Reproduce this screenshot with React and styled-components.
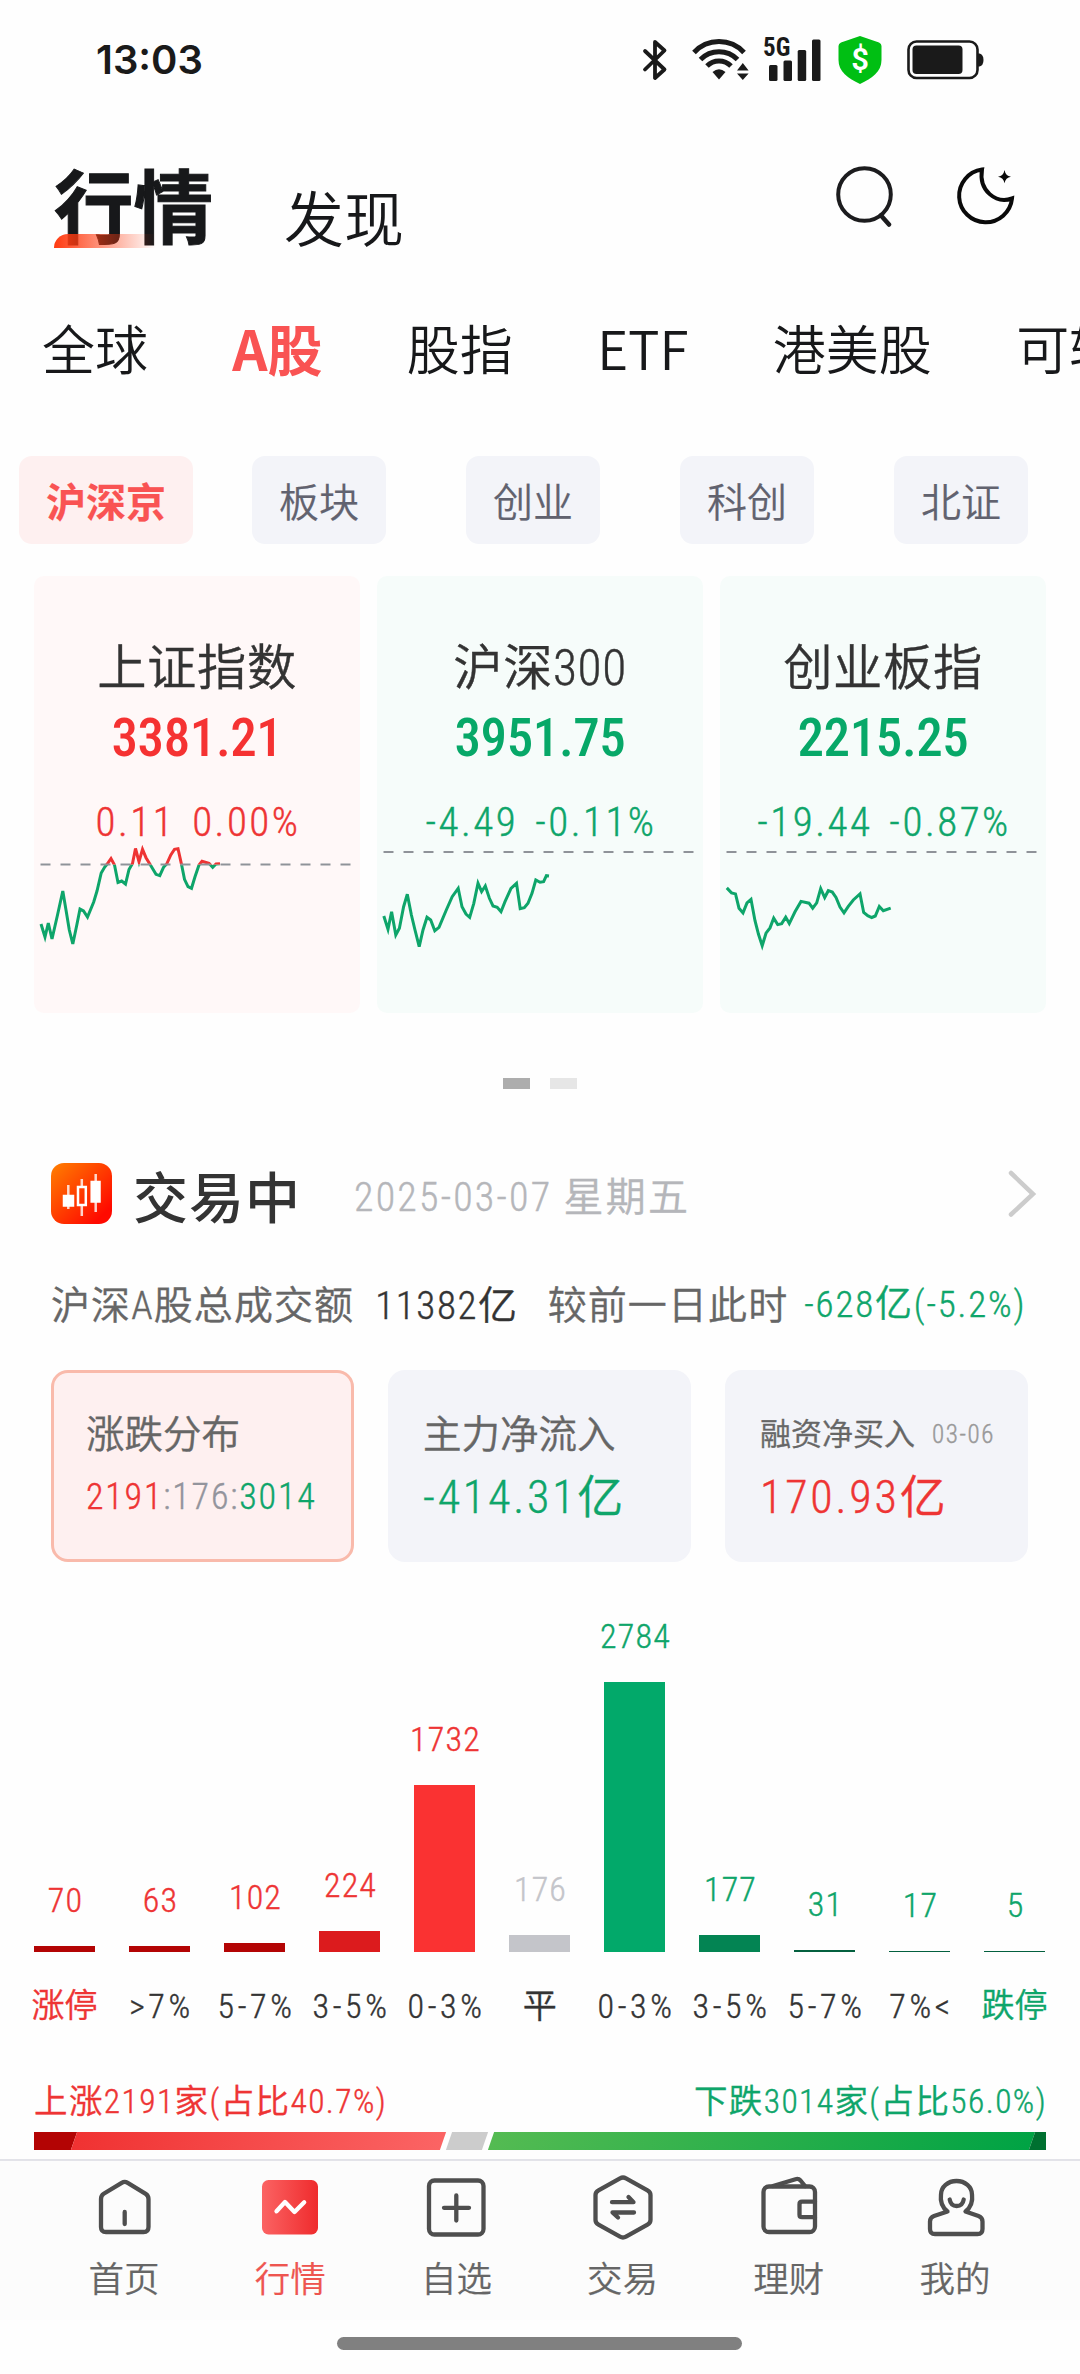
import React from "react";

import styled, { createGlobalStyle, css } from "styled-components";

const RED = "#ee3434";
const GREEN = "#0ea56a";

const SANS = `"Noto Sans CJK SC", sans-serif`;
const NUM = `"Roboto Condensed", "Noto Sans CJK SC DemiLight", "Noto Sans CJK SC", sans-serif`;

const CATEGORIES = ["全球", "A股", "股指", "ETF", "港美股", "可转债"];
const CHIPS = ["沪深京", "板块", "创业", "科创", "北证"];

const INDEXES = [
  {
    name: "上证指数",
    price: "3381.21",
    diff: "0.11",
    rate: "0.00%",
    up: true,
    base: 24.6,
    points:
      "7,84 11,97 14.3,83 18,99 23.5,75 28.8,51 32,70 35.3,90 38.8,104 42.8,85 46,69 49.5,71 53.5,77 59.7,62 63,51 67.2,33 70.7,27 73,24.3 77,18.5 80.5,25 84,42.5 87.7,41 91.5,44 95,29.5 98.5,23.5 101.5,8.5 105,21.7 108.5,9.3 112,17.7 116,24.3 122,34.3 125.8,35.7 129.5,27.3 132.7,24 136.8,15 140.5,9.3 144,8.7 147.5,24.3 150.5,39.3 154,46.7 157.5,48.3 161,36.7 165,25 168,21.3 175,23.3 178.7,27.3 182,24 186,23.7",
  },
  {
    name: "沪深300",
    price: "3951.75",
    diff: "-4.49",
    rate: "-0.11%",
    base: 12,
    points:
      "6.8,76 11,89.3 14.6,71.7 18.8,95 22.4,88.3 26.6,66.7 30.3,54.3 34.4,75 38,90 42.2,106.7 46,90 50,77.3 53.7,80 57.8,90.7 62,87.3 69.3,70 75.2,56.7 81.2,48.3 85,66.7 89,74 92.7,77.3 96.8,63.3 101,43.3 104.6,51.7 108.3,46 112.4,58.3 116,66 120.2,67.3 124,71.7 128,61.7 134,48.3 139.5,43.3 143.2,68.7 147.3,67.7 151,63.3 155,53.3 158.8,40 163,42.3 166.6,41.7 169.4,35.7 172,36",
  },
  {
    name: "创业板指",
    price: "2215.25",
    diff: "-19.44",
    rate: "-0.87%",
    base: 12,
    points:
      "6.8,47.9 11.5,52.9 15.5,53.9 19,68.2 23,72.9 27,62.9 31,59.3 35,80.7 38.5,94.3 42.2,105.7 46,93.2 50,87.9 53.7,78.2 57.7,84.6 61.7,83.6 65.7,77.1 69.3,83.6 75,71.8 81,61.4 89,63.2 92.7,68.2 96.7,62.9 100.7,48.6 104.7,57.5 108.3,50.7 112.3,52.1 116,57.5 120,67.1 124,72.9 128.3,66.4 133.3,60 140,53.9 143.7,72.5 147.7,75.7 151.7,77.5 155.3,76 159.3,66.4 163.3,70.7 170.7,68.2",
  },
];

const BARS = [
  { label: "涨停", value: 70, height: 6, fill: "#b30404", text: RED, labelColor: RED },
  { label: ">7%", value: 63, height: 6, fill: "#b30404", text: RED },
  { label: "5-7%", value: 102, height: 9, fill: "#b30404", text: RED },
  { label: "3-5%", value: 224, height: 21, fill: "#dc1b1d", text: RED },
  { label: "0-3%", value: 1732, height: 167, fill: "#fa3232", text: RED },
  { label: "平", value: 176, height: 17, fill: "#c4c5ca", text: "#c4c5ca" },
  { label: "0-3%", value: 2784, height: 270, fill: "#02a96a", text: GREEN },
  { label: "3-5%", value: 177, height: 17, fill: "#038453", text: GREEN },
  { label: "5-7%", value: 31, height: 2, fill: "#04603f", text: GREEN },
  { label: "7%<", value: 17, height: 1, fill: "#04603f", text: GREEN },
  { label: "跌停", value: 5, height: 1, fill: "#04603f", text: GREEN, labelColor: GREEN },
];

const TABS = [
  {
    label: "首页",
    icon: (
      <>
        <path d="M10 25q0-3.500 2.700-5.200L30.700 8.800q3-1.800 6 0l18 11Q57.500 21.500 57.500 25v28q0 5-5 5H15q-5 0-5-5Z" />
        <path d="M33.700 38v12" />
      </>
    ),
  },
  {
    label: "行情",
    active: true,
    icon: (
      <>
        <defs>
          <linearGradient id="quoteBg">
            <stop offset="0" stopColor="#fb6363" />
            <stop offset="1" stopColor="#ef2b2d" />
          </linearGradient>
        </defs>
        <rect x="5" y="6" width="56" height="54.500" rx="6.500" fill="url(#quoteBg)" stroke="none" />
        <path d="m19.500 37.300 8.500-9.300 9.500 10 9.700-9.700" stroke="#fff" />
      </>
    ),
  },
  {
    label: "自选",
    icon: (
      <>
        <rect x="6" y="6.500" width="54.500" height="54" rx="5.500" />
        <path d="M21 33.800h25M33.300 21.500v25" />
      </>
    ),
  },
  {
    label: "交易",
    icon: (
      <>
        <path d="M30 4.300q3-1.600 6 0l21.500 12Q60.500 18 60.500 21v25q0 3-3 4.700L36 62.700q-3 1.600-6 0l-21.500-12Q5.500 49 5.500 46V21q0-3 3-4.700Z" />
        <path d="M22 28.200h21.500L38.500 23M44 38.500H22.500l5.500 5" />
      </>
    ),
  },
  {
    label: "理财",
    icon: (
      <>
        <rect x="7.500" y="12.500" width="51.500" height="45.500" rx="5.500" />
        <path d="M17 12 39.500 5.200q3-.900 5 1.300l4.500 5.500M59 27.700H46q-2.500 0-2.500 2.500v10.500q0 2.500 2.500 2.500h13" />
      </>
    ),
  },
  {
    label: "我的",
    icon: (
      <>
        <path d="M25.500 37.500C17 31 19 21 19 20.500a15.500 13.500 0 0 1 31 0C50 21 52 31 43.500 37.500L56.500 42q4 1.500 4 5.500v7.500q0 5-5 5H13q-5 0-5-5v-7.500q0-4 4-5.500Z" />
        <path d="M27.700 25.500q1 6.500 7 6.500t7-6.500" />
      </>
    ),
  },
];

const StatusIcons = () => (
  <StatusGroup>
    <svg width="26" height="44" viewBox="0 0 26 44" fill="none" stroke="#1a1a1a" strokeWidth="3.800" strokeLinecap="round" strokeLinejoin="round">
      <path d="M3 13 22.500 31.500 13 40V4L22.500 12.500 3 31.500" />
    </svg>
    <WifiIcon width="60" height="44" viewBox="0 0 60 44" fill="none" stroke="#1a1a1a" strokeWidth="5">
      <path d="M4 14.500a34 34 0 0 1 50 0" />
      <path d="M10.500 21.500a26 26 0 0 1 37 0" />
      <path d="M17 28a17 17 0 0 1 24 0" />
      <path d="M22.500 34q6.500-5.500 13 0L29 41.500Z" fill="#1a1a1a" stroke="none" />
      <path d="M47 32.500 52.800 25l5.800 7.500ZM47 35.500h11.600L52.800 42Z" fill="#1a1a1a" stroke="none" />
    </WifiIcon>
    <Signal>
      <NetworkType>5G</NetworkType>
      <svg width="52" height="44" viewBox="0 0 52 44" fill="#1a1a1a">
        <rect x="0" y="27" width="8.500" height="16" rx="1.500" />
        <rect x="14.500" y="22.500" width="8.500" height="20.500" rx="1.500" />
        <rect x="28.700" y="12" width="8.500" height="31" rx="1.500" />
        <rect x="43" y="1.500" width="8.500" height="41.500" rx="1.500" />
      </svg>
    </Signal>
    <Shield>
      <svg width="44" height="48" viewBox="0 0 44 48">
        <path d="M22 0 41 6.500q2.500 1 2.500 3.500V24C43.500 36 34 42 22 48 10 42 .500 36 .500 24V10Q.500 7.500 3 6.500Z" fill="#00bf13" />
      </svg>
      <span>$</span>
    </Shield>
    <svg width="77" height="40" viewBox="0 0 77 40">
      <rect x="1.500" y="1.500" width="69" height="36.500" rx="8" fill="none" stroke="#1a1a1a" strokeWidth="2.600" />
      <rect x="5.500" y="5.500" width="50" height="28.500" rx="4" fill="#1a1a1a" />
      <path d="M71 13.500h1.500q4 1 4 6.500t-4 6.500H71Z" fill="#1a1a1a" />
    </svg>
  </StatusGroup>
);

const SearchIcon = () => (
  <svg width="64" height="64" viewBox="0 0 64 64" fill="none" stroke="#1c1c1e" strokeWidth="4" strokeLinecap="round">
    <circle cx="32.500" cy="31.500" r="26.300" />
    <path d="m49 52.500 8 9" strokeWidth="4.500" />
  </svg>
);

const MoonIcon = () => (
  <svg width="64" height="64" viewBox="0 0 64 64" fill="none" stroke="#0a0a0a" strokeWidth="4">
    <path d="M27 6.500A26.500 26.500 0 1 0 57 35.500C41 41 23.500 28 27 6.500Z" />
    <path d="M49.500 7q1 6 6.500 6.700-5.500.700-6.500 6.500-1-5.800-6.500-6.500Q48.500 13 49.500 7Z" fill="#0a0a0a" stroke="none" />
  </svg>
);

const CandleIcon = () => (
  <svg width="61" height="61" viewBox="0 0 61 61">
    <defs>
      <linearGradient id="candleBg" x1="0" y1="0" x2="1" y2="1">
        <stop offset="0" stopColor="#ff8000" />
        <stop offset="0.85" stopColor="#ff0a00" />
      </linearGradient>
    </defs>
    <rect width="61" height="61" rx="13" fill="url(#candleBg)" />
    <g stroke="#fff" strokeWidth="2.500">
      <path d="M17.300 22v24M30.800 16v7M30.800 42v11M44.700 11v38" opacity="0.8" />
      <rect x="13" y="33" width="9" height="9.500" fill="#fff" />
      <rect x="27" y="24" width="7.800" height="18" fill="none" />
      <rect x="40.700" y="19" width="7.800" height="19.500" fill="#fff" />
    </g>
  </svg>
);

const IndexCard = ({ name, price, diff, rate, up, base, points }) => (
  <IndexWrapper $up={up}>
    <IndexName>{name}</IndexName>
    <IndexPrice $up={up}>{price}</IndexPrice>
    <IndexChange $up={up}>
      <span>{diff}</span>
      <span>{rate}</span>
    </IndexChange>
    <svg width="326" height="173" viewBox="0 0 326 173" fill="none">
      <defs>
        <clipPath id={`above-${price}`}>
          <rect width="326" height={base} />
        </clipPath>
        <clipPath id={`below-${price}`}>
          <rect y={base} width="326" height="140" />
        </clipPath>
      </defs>
      <polyline points={points} stroke={GREEN} strokeWidth="3" clipPath={`url(#below-${price})`} />
      <polyline points={points} stroke={RED} strokeWidth="3" clipPath={`url(#above-${price})`} />
      <path d={`M6.500 ${base}H317`} stroke="#8f9399" strokeWidth="2" strokeDasharray="10 10" />
    </svg>
  </IndexWrapper>
);

const App = () => {
  return (
    <Page>
      <GlobalStyle />
      <StatusBar>
        <Time>13:03</Time>
        <StatusIcons />
      </StatusBar>

      <Header>
        <Title>行情</Title>
        <SubTitle>发现</SubTitle>
        <HeaderActions>
          <SearchIcon />
          <MoonIcon />
        </HeaderActions>
      </Header>

      <Categories>
        {CATEGORIES.map((name) => (
          <Category key={name} $active={name === "A股"}>
            {name}
          </Category>
        ))}
      </Categories>

      <Chips>
        {CHIPS.map((name, i) => (
          <Chip key={name} $active={i === 0}>
            {name}
          </Chip>
        ))}
      </Chips>

      <IndexList>
        {INDEXES.map((item) => (
          <IndexCard key={item.name} {...item} />
        ))}
      </IndexList>
      <Pager>
        <PagerDot $active />
        <PagerDot />
      </Pager>

      <MarketHeader>
        <CandleIcon />
        <MarketState>交易中</MarketState>
        <MarketDate>2025-03-07 星期五</MarketDate>
        <svg width="30" height="50" viewBox="0 0 30 50" fill="none" stroke="#ccc" strokeWidth="4.500" strokeLinecap="round">
          <path d="M4 4 26 25 4 45.500" />
        </svg>
      </MarketHeader>

      <Turnover>
        <span>沪深A股总成交额</span>
        <TurnoverTotal>11382亿</TurnoverTotal>
        <span>较前一日此时</span>
        <TurnoverDiff>-628亿(-5.2%)</TurnoverDiff>
      </Turnover>

      <Stats>
        <StatCard $active>
          <StatLabel>涨跌分布</StatLabel>
          <StatRatio>
            <Tint $color={RED}>2191</Tint>:176:<Tint $color={GREEN}>3014</Tint>
          </StatRatio>
        </StatCard>
        <StatCard>
          <StatLabel>主力净流入</StatLabel>
          <StatValue $color={GREEN}>-414.31亿</StatValue>
        </StatCard>
        <StatCard>
          <StatLabel $small>
            融资净买入<StatDate>03-06</StatDate>
          </StatLabel>
          <StatValue $color={RED}>170.93亿</StatValue>
        </StatCard>
      </Stats>

      <BarChart>
        {BARS.map(({ label, value, height, fill, text, labelColor }) => (
          <BarColumn key={label + value}>
            <BarValue $color={text}>{value}</BarValue>
            <Bar $height={height} $fill={fill} />
            <BarLabel $color={labelColor}>{label}</BarLabel>
          </BarColumn>
        ))}
      </BarChart>

      <Summary>
        <Tint $color={RED}>上涨2191家(占比40.7%)</Tint>
        <Tint $color={GREEN}>下跌3014家(占比56.0%)</Tint>
      </Summary>
      <RatioBar>
        <RatioPart $w={46} $bg="#b30404" />
        <RatioPart $w={369} $bg="linear-gradient(90deg, #f03232, #fb6464)" />
        <RatioPart $w={36} $bg="#ccc" $gap />
        <RatioPart $w={541} $bg="linear-gradient(90deg, #54bb52, #00a344)" $gap />
        <RatioPart $w={22} $bg="#007030" />
      </RatioBar>

      <TabBar>
        {TABS.map(({ label, icon, active }) => (
          <Tab key={label} $active={active}>
            <svg width="66" height="66" viewBox="0 0 66 66" fill="none" stroke="#4e4e4e" strokeWidth="4.300" strokeLinecap="round" strokeLinejoin="round">
              {icon}
            </svg>
            {label}
          </Tab>
        ))}
      </TabBar>
      <HomeIndicator />
    </Page>
  );
};

const GlobalStyle = createGlobalStyle`
  body {
    margin: 0;
    background: #fefefe;
  }
  * {
    box-sizing: border-box;
  }
  svg {
    display: block;
    flex-shrink: 0;
  }
`;

// the light digits get a hairline stroke, regular is too heavy next to the hanzi
const Page = styled.div`
  display: flex;
  flex-direction: column;
  width: 1080px;
  height: 2374px;
  overflow: hidden;
  background: #fefefe;
  color: #333;
  font-family: ${NUM};
  font-weight: 350;
  white-space: nowrap;
  -webkit-text-stroke: 0.4px currentColor;
`;

const StatusBar = styled.div`
  display: flex;
  align-items: center;
  justify-content: space-between;
  height: 120px;
  padding: 0 96px;
  -webkit-text-stroke: 0;
`;
const Time = styled.div`
  font-family: Inter, sans-serif;
  font-size: 40px;
  font-weight: 600;
  line-height: 48px;
  color: #1a1a1a;
`;
const StatusGroup = styled.div`
  display: flex;
  align-items: center;
`;
const WifiIcon = styled.svg`
  margin-left: 22px;
`;
const Signal = styled.div`
  display: flex;
  margin: 0 17px 0 13px;
`;
const NetworkType = styled.div`
  width: 6px;
  font-size: 25px;
  font-weight: 700;
  line-height: 20px;
  color: #1a1a1a;
`;
const Shield = styled.div`
  display: grid;
  place-items: center;
  margin-right: 25px;
  color: #fff;
  font-family: Roboto, sans-serif;
  font-size: 31px;
  font-weight: 600;
  line-height: 40px;

  > * {
    grid-area: 1 / 1;
  }
`;

const Header = styled.header`
  display: flex;
  align-items: flex-start;
  height: 170px;
  padding: 38px 61px 0 54px;
  color: #17181a;
`;
const Title = styled.h1`
  position: relative;
  margin: 0;
  font-family: ${SANS};
  font-size: 79.5px;
  font-weight: 700;
  line-height: 90px;
  -webkit-text-stroke: 1px currentColor;

  &::after {
    content: "";
    position: absolute;
    left: 0;
    bottom: 0;
    width: 102px;
    height: 14px;
    border-radius: 14px 0 0 0;
    background: linear-gradient(90deg, #ff3a10, rgba(255, 58, 16, 0.5) 50%, rgba(255, 58, 16, 0));
  }
`;
const SubTitle = styled.div`
  margin: 23px 0 0 71px;
  font-family: ${SANS};
  font-size: 60px;
  line-height: 70px;
  -webkit-text-stroke: 0;
`;
const HeaderActions = styled.div`
  display: flex;
  gap: 59px;
  margin: 5px 0 0 auto;
`;

const Categories = styled.nav`
  display: flex;
  align-items: center;
  gap: 84.3px;
  height: 114px;
  padding-left: 42px;
  -webkit-text-stroke: 0;
`;
const Category = styled.div`
  flex-shrink: 0;
  font-family: ${SANS};
  font-size: 53px;
  line-height: 60px;
  color: #17181a;

  ${({ $active }) =>
    $active &&
    css`
      font-size: 55px;
      font-weight: 700;
      color: #f95353;
    `}
`;

const Chips = styled.div`
  display: grid;
  grid-template-columns: 212px repeat(4, 214px);
  justify-items: center;
  padding: 52px 0 32px;
  -webkit-text-stroke: 0.2px currentColor;
`;
const Chip = styled.div`
  height: 88px;
  padding: 0 27px;
  border-radius: 13px;
  background: ${({ $active }) => ($active ? "#fef0f0" : "#f3f4f9")};
  color: ${({ $active }) => ($active ? "#f95353" : "#61626f")};
  font-family: ${SANS};
  font-size: 40px;
  font-weight: ${({ $active }) => ($active ? 700 : 350)};
  line-height: 88px;
`;

const IndexList = styled.div`
  display: flex;
  gap: 17px;
  padding-left: 34px;
`;
const IndexWrapper = styled.div`
  display: flex;
  flex-direction: column;
  align-items: center;
  width: 326px;
  height: 437px;
  padding-top: 62px;
  border-radius: 10px;
  background: ${({ $up }) => ($up ? "#fff8f8" : "#f6fcfa")};
`;
const IndexName = styled.div`
  font-size: 49.3px;
  letter-spacing: 0.6px;
  line-height: 60px;
`;
const IndexPrice = styled.div`
  margin-top: 10px;
  font-size: 53px;
  font-weight: 500;
  letter-spacing: -0.4px;
  line-height: 60px;
  color: ${({ $up }) => ($up ? "#f53232" : "#07a868")};
  -webkit-text-stroke: 0;
`;
const IndexChange = styled.div`
  display: flex;
  gap: 17px;
  margin-top: 36px;
  padding-left: 2px;
  font-size: 41px;
  letter-spacing: 2.5px;
  line-height: 36px;
  color: ${({ $up }) => ($up ? RED : GREEN)};
`;

const Pager = styled.div`
  display: flex;
  justify-content: center;
  gap: 20px;
  padding-top: 65px;
`;
const PagerDot = styled.div`
  width: 27px;
  height: 11px;
  background: ${({ $active }) => ($active ? "#adadad" : "#e6e6e6")};
`;

const MarketHeader = styled.div`
  display: flex;
  align-items: center;
  height: 61px;
  margin-top: 74px;
  padding: 0 43px 0 51px;

  > :last-child {
    margin-left: auto;
  }
`;
const MarketState = styled.div`
  margin-left: 21px;
  font-family: ${SANS};
  font-size: 55px;
  font-weight: 500;
  letter-spacing: 1px;
  line-height: 56px;
  -webkit-text-stroke: 0;
`;
const MarketDate = styled.div`
  padding-top: 8px;
  margin-left: 53px;
  font-size: 40px;
  letter-spacing: 2.2px;
  line-height: 50px;
  color: #b5b6ba;
`;

const Turnover = styled.div`
  display: flex;
  margin-top: 57px;
  padding-left: 51px;
  font-size: 39px;
  letter-spacing: 1.1px;
  line-height: 50px;
  color: #666;
`;
const TurnoverTotal = styled.span`
  margin: 0 29px 0 21px;
  letter-spacing: 1.6px;
  color: #333;
`;
const TurnoverDiff = styled.span`
  margin-left: 16px;
  font-size: 37px;
  letter-spacing: 1.8px;
  line-height: 48px;
  color: ${GREEN};
`;

const Stats = styled.div`
  display: flex;
  gap: 34px;
  margin-top: 39px;
  padding-left: 51px;
`;
const StatCard = styled.div`
  width: 303px;
  height: 192px;
  padding: 42px 0 0 32px;
  border: 3px solid ${({ $active }) => ($active ? "#f9baab" : "#f3f4f9")};
  border-radius: 17px;
  background: ${({ $active }) => ($active ? "#fef0f0" : "#f3f4f9")};
`;
const StatLabel = styled.div`
  display: flex;
  height: 40px;
  font-size: ${({ $small }) => ($small ? 31 : 38.5)}px;
  line-height: 40px;
  color: #666;
`;
const StatDate = styled.span`
  margin-left: 17px;
  font-size: 25px;
  letter-spacing: 1.6px;
  color: #999;
`;
const StatValue = styled.div`
  margin-top: 17px;
  font-size: 46px;
  letter-spacing: 2.8px;
  line-height: 50px;
  color: ${({ $color }) => $color};
`;
const StatRatio = styled(StatValue)`
  font-size: 36px;
  letter-spacing: 1.8px;
  color: #93949c;
`;
const Tint = styled.span`
  color: ${({ $color }) => $color};
`;

const BarChart = styled.div`
  display: flex;
  align-items: flex-end;
  height: 464px;
  padding-left: 17px;
`;
const BarColumn = styled.div`
  display: flex;
  flex-direction: column;
  align-items: center;
  width: 95px;
`;
const BarValue = styled.div`
  margin-bottom: 26px;
  padding-left: 2px;
  font-size: 34px;
  letter-spacing: 1.2px;
  line-height: 40px;
  color: ${({ $color }) => $color};
`;
const Bar = styled.div`
  width: 61px;
  height: ${({ $height }) => $height}px;
  background: ${({ $fill }) => $fill};
`;
const BarLabel = styled.div`
  margin-top: 34px;
  padding-left: ${({ $color }) => ($color ? 0 : 4)}px;
  font-size: ${({ $color }) => ($color ? 33 : 34)}px;
  letter-spacing: ${({ $color }) => ($color ? 0 : 3.6)}px;
  line-height: 40px;
  color: ${({ $color }) => $color || "#333"};
`;

const Summary = styled.div`
  display: flex;
  justify-content: space-between;
  margin-top: 56px;
  padding: 0 33px 0 34px;
  font-size: 33.5px;
  letter-spacing: 1.4px;
  line-height: 40px;
`;
const RatioBar = styled.div`
  display: flex;
  width: 1012px;
  height: 18px;
  margin: 10px 0 0 34px;
  overflow: hidden;
`;
const RatioPart = styled.div`
  flex: 0 0 ${({ $w }) => $w}px;
  margin-left: ${({ $gap }) => ($gap ? 6 : 0)}px;
  background: ${({ $bg }) => $bg};
  transform: skewX(-19deg);

  &:first-child {
    margin-left: -6px;
  }
`;

const TabBar = styled.nav`
  display: flex;
  height: 161px;
  margin-top: 9px;
  padding: 13px 42px 0 41px;
  border-top: 2px solid #e3e3e9;
  background: #fcfcfc;
  -webkit-text-stroke: 0.2px currentColor;
`;
const Tab = styled.div`
  display: flex;
  flex: 1;
  flex-direction: column;
  align-items: center;
  gap: 17px;
  font-family: ${SANS};
  font-size: 35.5px;
  line-height: 40px;
  color: ${({ $active }) => ($active ? "#ee5550" : "#666")};
`;
const HomeIndicator = styled.div`
  width: 405px;
  height: 13px;
  margin: 17px auto 0 337px;
  border-radius: 7px;
  background: #808080;
`;

export default App;
